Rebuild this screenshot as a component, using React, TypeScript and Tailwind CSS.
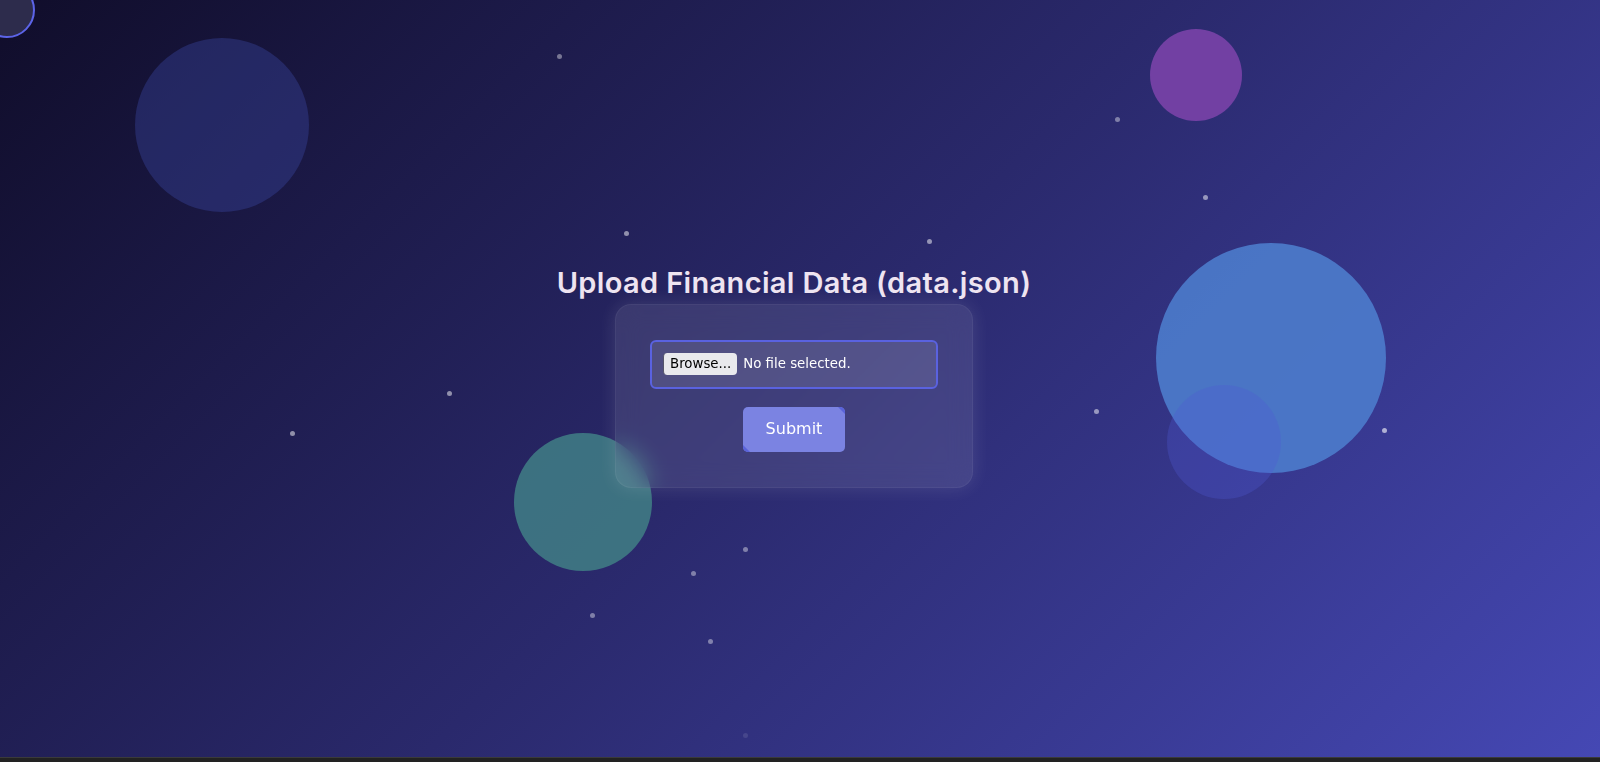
import { useState } from "react";

const dots = [
  { x: 559, y: 56, o: "opacity-40" },
  { x: 1117, y: 119, o: "opacity-40" },
  { x: 1205, y: 197, o: "opacity-50" },
  { x: 626, y: 233, o: "opacity-50" },
  { x: 929, y: 241, o: "opacity-50" },
  { x: 449, y: 393, o: "opacity-50" },
  { x: 292, y: 433, o: "opacity-50" },
  { x: 1096, y: 411, o: "opacity-50" },
  { x: 1384, y: 430, o: "opacity-60" },
  { x: 745, y: 549, o: "opacity-40" },
  { x: 693, y: 573, o: "opacity-40" },
  { x: 592, y: 615, o: "opacity-40" },
  { x: 710, y: 641, o: "opacity-40" },
  { x: 745, y: 735, o: "opacity-10" },
];

export default function App() {
  const [fileName, setFileName] = useState<string | null>(null);

  return (
    <div className="w-[1600px] h-[762px] overflow-hidden flex flex-col bg-[#1e1e1e]">
      <main className="relative h-[757px] overflow-hidden bg-[linear-gradient(135deg,#100d2a_0%,#2a296c_50%,#4548b4_100%)]">
        {/* floating shapes */}
        <div className="absolute left-[135px] top-[38px] w-[174px] h-[174px] rounded-full bg-[#3a46a0] opacity-40" />
        <div className="absolute left-[1150px] top-[29px] w-[92px] h-[92px] rounded-full bg-[#7a42a8] opacity-90" />
        <div className="absolute left-[1156px] top-[243px] w-[230px] h-[230px] rounded-full bg-[#4c7ccc] opacity-90" />
        <div className="absolute left-[1167px] top-[385px] w-[114px] h-[114px] rounded-full bg-[#5058d4] opacity-30" />
        <div className="absolute left-[514px] top-[433px] w-[138px] h-[138px] rounded-full bg-[#3f7a84] opacity-90" />

        {/* cursor ring */}
        <div className="absolute left-[-21px] top-[-18px] w-[56px] h-[56px] rounded-full border-2 border-[#5c64e8] bg-[#2d2c4c]" />

        {/* particles */}
        {dots.map((d, i) => (
          <span
            key={i}
            className={`absolute w-[5px] h-[5px] rounded-full bg-white ${d.o}`}
            style={{ left: d.x - 2, top: d.y - 2 }}
          />
        ))}

        <div className="relative h-full flex flex-col items-center justify-center pr-3 pb-[4px]">
          <h1 className="font-['Inter',sans-serif] font-semibold text-[29px] leading-[34px] text-[#eee4f1] mb-[4px] tracking-[0.35px]">
            Upload Financial Data (data.json)
          </h1>

          <form
            className="flex flex-col items-center w-[358px] px-[34px] pt-[35px] pb-[35px] rounded-2xl border border-white/5 bg-white/10 backdrop-blur-md shadow-[0_0_18px_rgba(255,255,255,0.12)] font-['DejaVu_Sans',sans-serif]"
            onSubmit={(e) => e.preventDefault()}
          >
            <label className="w-[288px] h-[49px] flex items-center px-[11px] rounded-md border-2 border-[#5a62e0] bg-white/10 cursor-pointer">
              <span className="h-[22px] px-[6px] flex items-center rounded-[4px] bg-[#e9e9ed] text-black text-[13.33px] border-l border-[#55556a]">
                Browse...
              </span>
              <span className="ml-[6px] text-white text-[13.33px]">
                {fileName ?? "No file selected."}
              </span>
              <input
                type="file"
                accept=".json"
                className="hidden"
                onChange={(e) => setFileName(e.target.files?.[0]?.name ?? null)}
              />
            </label>

            <button
              type="submit"
              className="relative overflow-hidden mt-[18px] w-[102px] h-[45px] rounded-[5px] bg-[#7b83e2] text-white text-[16px]"
            >
              <span className="absolute right-0 top-0 w-0 h-0 border-t-[7px] border-l-[7px] border-l-transparent border-t-[#5a63da]" />
              <span className="absolute left-0 bottom-0 w-0 h-0 border-b-[7px] border-r-[7px] border-r-transparent border-b-[#5a63da]" />
              Submit
            </button>
          </form>
        </div>
      </main>
      <div className="h-[5px] bg-[#222222] border-t border-[#3a3a3a]" />
    </div>
  );
}
